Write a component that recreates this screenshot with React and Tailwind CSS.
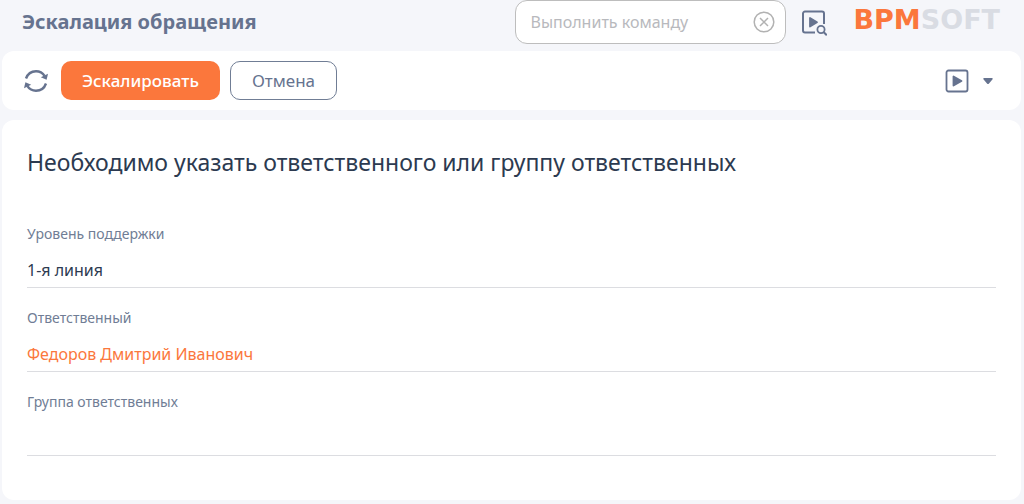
import { useState } from 'react';

const RefreshIcon = () => (
  <svg width="26" height="26" viewBox="0 0 26 26" fill="none" stroke="currentColor" strokeWidth="2.400" aria-hidden="true">
    <path d="M3 10.5C4.6 6 8.400 3.200 13 3.200c3.600 0 6.700 1.700 8.600 4.600" />
    <path d="M23 15.500c-1.600 4.500-5.400 7.300-10 7.300-3.600 0-6.700-1.700-8.600-4.600" />
    <path d="M25 5.800l-1.400 5.900-5.800-2.500z" fill="currentColor" stroke="none" />
    <path d="M1 20.200l1.400-5.900 5.800 2.500z" fill="currentColor" stroke="none" />
  </svg>
);

const PlayIcon = () => (
  <svg width="24" height="24" viewBox="0 0 24 24" fill="none" stroke="currentColor" aria-hidden="true">
    <rect x="1.500" y="1.500" width="21" height="21" rx="2" strokeWidth="1.800" />
    <path d="M8.500 7.500v9l8-4.500z" fill="currentColor" strokeWidth="1.800" strokeLinejoin="round" />
  </svg>
);

const PlaySearchIcon = () => (
  <svg width="26" height="26" viewBox="0 0 26 26" fill="none" stroke="currentColor" aria-hidden="true">
    <path d="M14 22.500H4a2 2 0 0 1-2-2V3.500a2 2 0 0 1 2-2h17a2 2 0 0 1 2 2V14" strokeWidth="2" />
    <path d="M9 8v8.500l7-4.250z" fill="currentColor" strokeWidth="1.800" strokeLinejoin="round" />
    <circle cx="20" cy="19.500" r="3.600" strokeWidth="1.800" />
    <path d="M22.800 22.300l3 3" strokeWidth="2" />
  </svg>
);

const ClearIcon = () => (
  <svg width="22" height="22" viewBox="0 0 22 22" fill="none" stroke="currentColor" strokeWidth="1.500" aria-hidden="true">
    <circle cx="11" cy="11" r="9.800" />
    <path d="M7 7l8 8M15 7l-8 8" />
  </svg>
);

const Field = ({ id, label, children }) => (
  <div className="pt-5">
    <label htmlFor={id} className="block text-sm leading-5 text-[#707d95]">{label}</label>
    <div className="mt-2 flex h-9 items-center border-b border-[#dcdde1] text-base">{children}</div>
  </div>
);

export default function App() {
  const [command, setCommand] = useState('');
  const [level, setLevel] = useState('1-я линия');
  const [group, setGroup] = useState('');

  return (
    <div className="min-h-screen bg-[#f5f6fa] pr-[3px] pl-0.5 font-['Noto_Sans',sans-serif] text-[#66738f]">
      <header className="flex h-[51px] items-start pr-[21px] pl-5">
        <h1 className="mt-2 text-xl leading-7 font-bold">Эскалация обращения</h1>
        <div className="ml-auto flex h-11 w-[271px] items-center rounded-xl border border-[#bdbdbd] bg-white pr-2.5 pl-3.5">
          <input
            aria-label="Выполнить команду"
            placeholder="Выполнить команду"
            value={command}
            onChange={(e) => setCommand(e.target.value)}
            className="min-w-0 flex-1 text-base text-[#2c3a50] outline-none placeholder:text-[#b8b9bd]"
          />
          <button type="button" aria-label="Очистить" onClick={() => setCommand('')} className="text-[#b2b2b2]">
            <ClearIcon />
          </button>
        </div>
        <button type="button" aria-label="Найти процесс" className="mt-2.5 ml-[15px]">
          <PlaySearchIcon />
        </button>
        <div className="mt-1.5 ml-[26px] font-['DejaVu_Sans',sans-serif] text-[27px] leading-7 font-bold text-[#d9dce3]">
          <span className="text-[#fb773c]">BPM</span>SOFT
        </div>
      </header>

      <div className="flex items-center gap-2.5 rounded-xl bg-white py-2.5 pr-7 pl-[21px]">
        <button type="button" aria-label="Обновить" className="mr-0.5">
          <RefreshIcon />
        </button>
        <button type="button" className="h-[39px] rounded-[10px] bg-[#fb773c] px-[21px] text-[17px] font-medium text-white">
          Эскалировать
        </button>
        <button type="button" className="h-[39px] rounded-[10px] border border-[#707d95] px-[21px] text-[17px]">
          Отмена
        </button>
        <button type="button" aria-label="Запустить процесс" className="ml-auto flex items-center gap-3.5">
          <PlayIcon />
          <svg width="10" height="6" viewBox="0 0 10 6" fill="currentColor" aria-hidden="true">
            <path d="M1 0h8a.8.8 0 0 1 .6 1.300L6 5.400a1.300 1.300 0 0 1-2 0L.4 1.300A.8.8 0 0 1 1 0z" />
          </svg>
        </button>
      </div>

      <main className="mt-2.5 rounded-xl bg-white px-[25px] pt-[26px] pb-11">
        <h2 className="mb-[26px] text-[23px] leading-8 text-[#2c3a50]">
          Необходимо указать ответственного или группу ответственных
        </h2>
        <Field id="level" label="Уровень поддержки">
          <input
            id="level"
            value={level}
            onChange={(e) => setLevel(e.target.value)}
            className="w-full text-[#2c3a50] outline-none"
          />
        </Field>
        <Field id="owner" label="Ответственный">
          <a id="owner" href="#owner" className="text-[#fb773c]">Федоров Дмитрий Иванович</a>
        </Field>
        <Field id="group" label="Группа ответственных">
          <input
            id="group"
            value={group}
            onChange={(e) => setGroup(e.target.value)}
            className="w-full text-[#2c3a50] outline-none"
          />
        </Field>
      </main>
    </div>
  );
}
